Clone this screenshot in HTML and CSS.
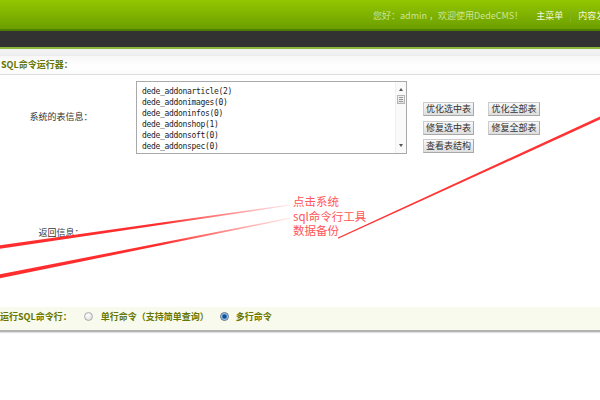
FILE: index.html
```html
<!DOCTYPE html>
<html lang="zh-CN">
<head>
<meta charset="utf-8">
<title>SQL命令运行器</title>
<link rel="stylesheet" href="styles.css">
</head>
<body>
<header class="top">
  <span class="greet">您好：admin ，欢迎使用DedeCMS！</span>
  <a class="menu">主菜单</a>
  <a class="menu sep">内容发布</a>
</header>
<div class="dark-bar"></div>
<div class="strip"></div>
<main class="panel">
  <div class="panel-title">SQL命令运行器：</div>
  <div class="row row-tables">
    <div class="label">系统的表信息：</div>
    <div class="field">
      <div class="listbox">
        <div class="list-items">
          <div>dede_addonarticle(2)</div>
          <div>dede_addonimages(0)</div>
          <div>dede_addoninfos(0)</div>
          <div>dede_addonshop(1)</div>
          <div>dede_addonsoft(0)</div>
          <div>dede_addonspec(0)</div>
          <div>dede_admin(1)</div>
        </div>
        <div class="scrollbar">
          <span class="arrow up"></span>
          <span class="thumb"></span>
          <span class="track"></span>
          <span class="arrow down"></span>
        </div>
      </div>
      <div class="btns">
        <button class="btn">优化选中表</button>
        <button class="btn">优化全部表</button>
        <button class="btn">修复选中表</button>
        <button class="btn">修复全部表</button>
        <button class="btn">查看表结构</button>
      </div>
    </div>
  </div>
  <div class="row row-result">
    <div class="label">返回信息：</div>
    <div class="field"></div>
  </div>
  <div class="row-cmd">
    <span class="cmd-label">运行SQL命令行：</span>
    <span class="radio"></span>
    <span class="radio-label">单行命令（支持简单查询）</span>
    <span class="radio checked"></span>
    <span class="radio-label">多行命令</span>
  </div>
</main>
<div class="note">点击系统<br>sql命令行工具<br>数据备份</div>
<svg class="arrows" width="600" height="400" viewBox="0 0 600 400">
  <defs>
    <linearGradient id="fade1" gradientUnits="userSpaceOnUse" x1="0" y1="0" x2="292" y2="0">
      <stop offset="0" stop-color="#ff2d2d" stop-opacity="1"/>
      <stop offset="0.55" stop-color="#ff2d2d" stop-opacity="1"/>
      <stop offset="1" stop-color="#ff2d2d" stop-opacity="0.08"/>
    </linearGradient>
  </defs>
  <polygon points="0,245.2 290,204.4 290,205.6 0,248.8" fill="url(#fade1)"/>
  <polygon points="0,274.3 290,217.6 290,218.8 0,278.3" fill="url(#fade1)"/>
  <polygon points="338,237.4 600,116.4 600,119.6 338,238.8" fill="#ff3333"/>
</svg>
</body>
</html>
```
FILE: styles.css
```css
html, body {
  margin: 0;
  padding: 0;
}
body {
  width: 600px;
  height: 400px;
  overflow: hidden;
  position: relative;
  background: #ffffff;
  font-family: "Noto Sans CJK SC", "Liberation Sans", sans-serif;
  font-size: 9px;
  color: #333333;
}

/* top green header */
.top {
  height: 31px;
  box-sizing: border-box;
  padding: 2px 0 0 373px;
  display: flex;
  align-items: center;
  white-space: nowrap;
  overflow: hidden;
  background: linear-gradient(#93c700, #6c9e00);
  border-bottom: 2px solid #4f7f00;
}
.greet {
  color: #cde597;
}
.menu {
  color: #f0f7de;
  margin-left: 13px;
}
.menu.sep {
  margin-left: 7px;
  padding-left: 7px;
  border-left: 1px solid #82b21c;
  line-height: 13px;
}

.dark-bar {
  height: 16px;
  background: #323232;
  border-bottom: 2px solid #88ba3a;
}
.strip {
  height: 6px;
  background: linear-gradient(#f4f4f4, #efefef);
}

/* panel */
.panel-title {
  height: 18px;
  line-height: 18px;
  padding-left: 1px;
  background: linear-gradient(#f7f7f7, #ffffff 60%, #fafafa);
  border-top: 1px solid #ececec;
  border-bottom: 1px solid #dedede;
  font-weight: bold;
  color: #667700;
}
.row {
  display: grid;
  grid-template-columns: 122px 1fr;
  align-items: center;
}
.label {
  text-align: center;
  color: #333333;
}
.row-tables .field {
  display: flex;
  align-items: flex-start;
  gap: 16px;
  padding: 6px 0 3px 14px;
}
.listbox {
  width: 269px;
  height: 71px;
  border: 1px solid #a9a9a9;
  background: #ffffff;
  display: flex;
  overflow: hidden;
}
.list-items {
  flex: 1;
  padding: 4px 0 0 5px;
  font-family: "DejaVu Sans Mono", "Liberation Mono", monospace;
  font-size: 8px;
  letter-spacing: -0.32px;
  line-height: 11px;
  color: #222222;
  overflow: hidden;
}
.scrollbar {
  width: 10px;
  display: flex;
  flex-direction: column;
  align-items: center;
  background: #fafafa;
  border-left: 1px solid #f0f0f0;
}
.arrow {
  width: 0;
  height: 0;
  border-left: 2.5px solid transparent;
  border-right: 2.5px solid transparent;
  margin: 6px 0 4px;
}
.arrow.up {
  border-bottom: 3px solid #555555;
}
.arrow.down {
  border-top: 3px solid #555555;
  margin: 3px 0 6px;
}
.thumb {
  width: 8px;
  height: 9px;
  box-sizing: border-box;
  border: 1px solid #b5b5b5;
  background-image:
    linear-gradient(#999 0 0), linear-gradient(#999 0 0), linear-gradient(#999 0 0),
    linear-gradient(#f3f3f3, #e2e2e2);
  background-size: 4px 1px, 4px 1px, 4px 1px, 100% 100%;
  background-position: 1px 1px, 1px 3px, 1px 5px, 0 0;
  background-repeat: no-repeat;
}
.track {
  flex: 1;
}

.btns {
  display: grid;
  grid-template-columns: 51px 52px;
  column-gap: 14px;
  row-gap: 4.5px;
  margin-top: 21px;
}
.btn {
  height: 14px;
  padding: 0;
  margin: 0;
  font-family: "Noto Sans CJK SC", sans-serif;
  font-size: 9px;
  line-height: 12px;
  color: #333333;
  background: linear-gradient(#f8f8f8, #dedede);
  border: 1px solid #cccccc;
  border-right-color: #a8a8a8;
  border-bottom-color: #a8a8a8;
  border-radius: 0;
}

.row-result {
  height: 150px;
}

/* command row */
.row-cmd {
  height: 25px;
  box-sizing: border-box;
  padding-bottom: 5px;
  display: flex;
  align-items: center;
  background: #f8faee;
  border-bottom: 2px solid #b3b3b3;
  box-shadow: 0 1px 1px rgba(0, 0, 0, 0.12);
  font-weight: bold;
  color: #667700;
  white-space: nowrap;
}
.cmd-label {
  margin-right: 12px;
}
.radio {
  width: 9px;
  height: 9px;
  box-sizing: border-box;
  border-radius: 50%;
  border: 1px solid #acacac;
  background: radial-gradient(circle at 40% 35%, #ffffff, #d6d6d6);
  margin-right: 8px;
}
.radio.checked {
  border-color: #5d6f80;
  background: radial-gradient(circle, #0f4f96 0 1.6px, #5c9bd8 2.4px, #cfe0f0 3.6px);
  margin-left: 11px;
  margin-right: 7px;
}

/* annotation */
.note {
  position: absolute;
  left: 293px;
  top: 194px;
  font-family: "Noto Sans CJK SC", sans-serif;
  font-size: 11.5px;
  line-height: 14.5px;
  color: #ff5656;
}
.arrows {
  position: absolute;
  left: 0;
  top: 0;
  pointer-events: none;
}
```
